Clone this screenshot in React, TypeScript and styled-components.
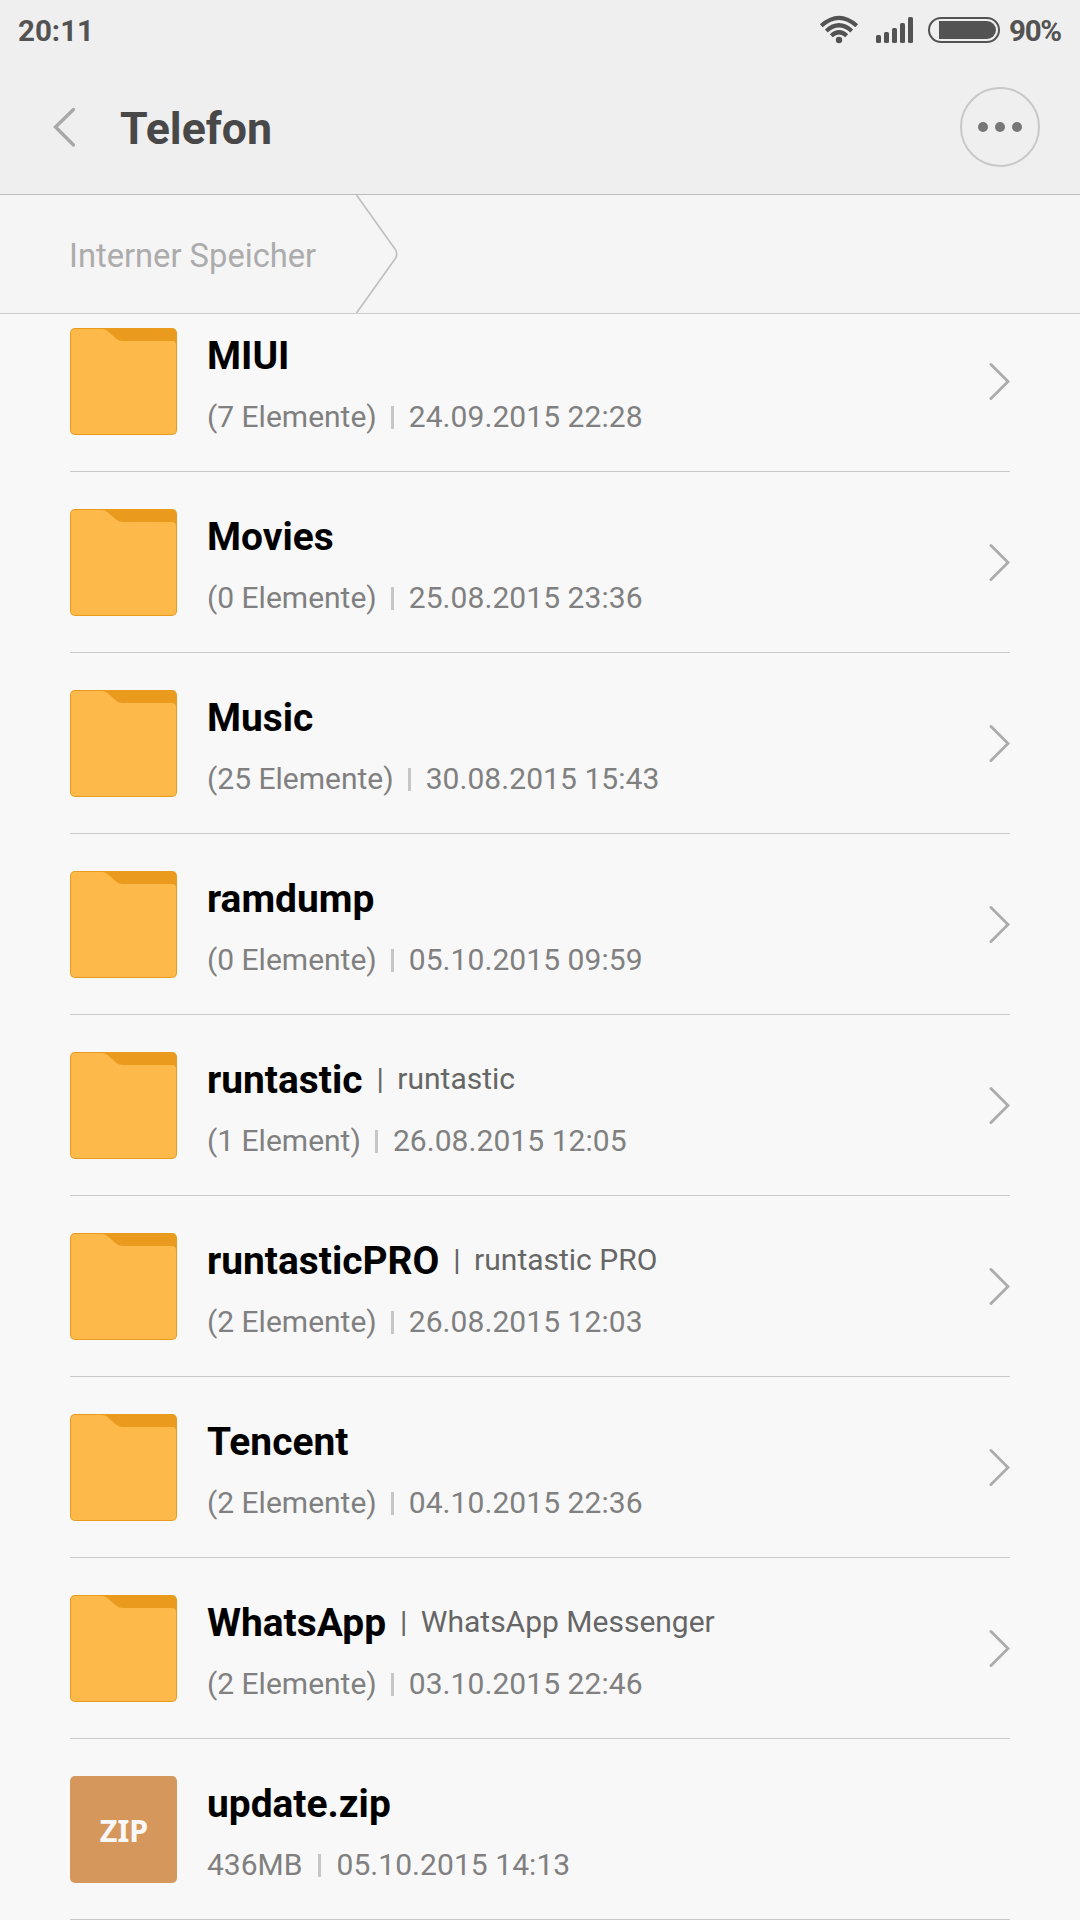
import React from 'react';
import styled, { createGlobalStyle } from 'styled-components';

const GlobalStyle = createGlobalStyle`
  * { box-sizing: border-box; }
  html, body { margin: 0; padding: 0; }
  body { background: #f8f8f8; font-family: Roboto, "Noto Sans", sans-serif; }
`;

const Screen = styled.main`
  width: 1080px;
  height: 1920px;
  display: flex;
  flex-direction: column;
  overflow: hidden;
  background: #f8f8f8;
`;

const TopArea = styled.header`
  height: 195px;
  flex: none;
  display: flex;
  flex-direction: column;
  background: #efefef;
  border-bottom: 1px solid #bdbdbd;
`;

const StatusBar = styled.div`
  height: 60px;
  padding: 0 18px;
  display: flex;
  align-items: center;
  justify-content: space-between;
  color: #535353;
  font-size: 29.5px;
  font-weight: 700;
  line-height: 60px;
`;

const StatusIcons = styled.div`
  display: flex;
  align-items: center;
  height: 60px;
`;

const WifiIcon = styled.svg`
  width: 40px;
  height: 60px;
  margin-right: 17px;
`;

const SignalBars = styled.div`
  display: flex;
  align-items: flex-end;
  gap: 3px;
  height: 26px;
  margin-right: 15px;
`;

const Bar = styled.span<{ $height: number }>`
  width: 5px;
  height: ${(p) => p.$height}px;
  border-radius: 1.5px;
  background: #535353;
`;

const Battery = styled.div`
  width: 72px;
  height: 26px;
  padding: 2px 2px 2px 9px;
  border: 2px solid #535353;
  border-radius: 13px;
  margin-right: 9px;
`;

const BatteryLevel = styled.div`
  width: 57px;
  height: 18px;
  border-radius: 0 9px 9px 0;
  background: #535353;
`;

const Time = styled.span`
  display: block;
  padding-top: 2px;
`;

const Percent = styled.span`
  display: block;
  width: 53px;
  padding-top: 1px;
  letter-spacing: -1.3px;
  white-space: nowrap;
`;

const TitleBar = styled.div`
  height: 134px;
  padding: 0 40px 0 50px;
  display: flex;
  align-items: center;
`;

const BackIcon = styled.svg`
  width: 28px;
  height: 44px;
  margin-right: 42px;
`;

const PageTitle = styled.h1`
  flex: 1;
  margin: 0;
  padding-top: 3px;
  color: #484848;
  font-size: 44.7px;
  font-weight: 700;
  line-height: 60px;
`;

const MoreButton = styled.button`
  width: 80px;
  height: 80px;
  padding: 0;
  display: flex;
  align-items: center;
  justify-content: center;
  gap: 7px;
  border: 2px solid #c8c8c8;
  border-radius: 50%;
  background: transparent;
`;

const Dot = styled.span`
  width: 10px;
  height: 10px;
  border-radius: 50%;
  background: #777777;
`;

const Breadcrumb = styled.nav`
  height: 119px;
  flex: none;
  padding-left: 69px;
  display: flex;
  align-items: center;
  background: #f5f5f5;
  border-bottom: 1px solid #cccccc;
`;

const Crumb = styled.span`
  width: 286px;
  padding-top: 4px;
  color: #acacac;
  font-size: 32.7px;
  line-height: 44px;
`;

const CrumbArrow = styled.svg`
  width: 44px;
  height: 118px;
`;

const ListViewport = styled.section`
  flex: 1;
  min-height: 0;
  overflow: hidden;
`;

const List = styled.ul`
  margin: -23px 70px 0;
  padding: 0;
  list-style: none;
`;

const Row = styled.li`
  height: 181px;
  padding: 0 0 1px;
  display: flex;
  align-items: center;
  border-bottom: 1px solid #c9c9c9;
`;

const FolderIcon = styled.svg`
  width: 107px;
  height: 107px;
  margin-top: 2px;
  flex: none;
`;

const ZipIcon = styled.div`
  width: 107px;
  height: 107px;
  margin-top: 2px;
  padding: 0 0 0 1px;
  flex: none;
  display: flex;
  align-items: center;
  justify-content: center;
  border-radius: 5px;
  background: #d5975c;
  color: #f8f8f8;
  font: 700 30.5px/40px "Noto Sans", sans-serif;
`;

const Info = styled.div`
  flex: 1;
  height: 107px;
  margin-top: 2px;
  padding: 2px 0 0 30px;
`;

const NameLine = styled.div`
  height: 52px;
  display: flex;
  align-items: center;
  white-space: nowrap;
`;

const Name = styled.span`
  color: #000000;
  font-size: 38.9px;
  font-weight: 700;
  line-height: 52px;
`;

const Alias = styled.span`
  color: #666666;
  font-size: 30px;
  line-height: 50px;
  margin-top: -2px;
`;

const Pipe = styled(Alias)`
  margin-left: 14px;
  margin-right: 13.5px;
`;

const MetaLine = styled.div`
  height: 40px;
  margin-top: 15px;
  display: flex;
  align-items: center;
  color: #808080;
  font-size: 30px;
  line-height: 40px;
  white-space: nowrap;
`;

const MetaDivider = styled.span<{ $wide?: boolean }>`
  width: 3px;
  height: 23px;
  margin: 0 15px 0 ${(p) => (p.$wide ? 16 : 14)}px;
  background: #c6c6c6;
`;

const DateText = styled.span`
  letter-spacing: 0.06px;
`;

const ChevronIcon = styled.svg`
  width: 24px;
  height: 42px;
  flex: none;
`;

type Entry = {
  name: string;
  alias?: string;
  detail: string;
  date: string;
  zip?: boolean;
};

const entries: Entry[] = [
  { name: 'MIUI', detail: '(7 Elemente)', date: '24.09.2015 22:28' },
  { name: 'Movies', detail: '(0 Elemente)', date: '25.08.2015 23:36' },
  { name: 'Music', detail: '(25 Elemente)', date: '30.08.2015 15:43' },
  { name: 'ramdump', detail: '(0 Elemente)', date: '05.10.2015 09:59' },
  { name: 'runtastic', alias: 'runtastic', detail: '(1 Element)', date: '26.08.2015 12:05' },
  { name: 'runtasticPRO', alias: 'runtastic PRO', detail: '(2 Elemente)', date: '26.08.2015 12:03' },
  { name: 'Tencent', detail: '(2 Elemente)', date: '04.10.2015 22:36' },
  { name: 'WhatsApp', alias: 'WhatsApp Messenger', detail: '(2 Elemente)', date: '03.10.2015 22:46' },
  { name: 'update.zip', detail: '436MB', date: '05.10.2015 14:13', zip: true },
];

const Folder = () => (
  <FolderIcon viewBox="0 0 107 107">
    <rect width="107" height="107" rx="5" fill="#ea9a1c" />
    <path
      d="M5 1H32Q35 1 37.500 3L46 10.500Q49 13 53 13H102Q106 13 106 17V102Q106 106 102 106H5Q1 106 1 102V5Q1 1 5 1Z"
      fill="#fdb94a"
    />
  </FolderIcon>
);

const FileRow = ({ entry }: { entry: Entry }) => (
  <Row>
    {entry.zip ? <ZipIcon>ZIP</ZipIcon> : <Folder />}
    <Info>
      <NameLine>
        <Name>{entry.name}</Name>
        {entry.alias && (
          <>
            <Pipe>|</Pipe>
            <Alias>{entry.alias}</Alias>
          </>
        )}
      </NameLine>
      <MetaLine>
        <span>{entry.detail}</span>
        <MetaDivider $wide={entry.zip} />
        <DateText>{entry.date}</DateText>
      </MetaLine>
    </Info>
    {!entry.zip && (
      <ChevronIcon viewBox="0 0 24 42">
        <path d="M5 4.500L22 21.500L5 38.500" fill="none" stroke="#acacac" strokeWidth="2.900" strokeLinecap="round" />
      </ChevronIcon>
    )}
  </Row>
);

export default function App() {
  return (
    <>
      <GlobalStyle />
      <Screen>
        <TopArea>
          <StatusBar>
            <Time>20:11</Time>
            <StatusIcons>
              <WifiIcon viewBox="0 0 40 60" fill="none" stroke="#535353" strokeWidth="4.200">
                <path d="M2.300 25.800Q20 10 37.700 25.800" />
                <path d="M7.300 31Q20 19.600 32.700 31" />
                <path d="M12.300 35.700Q20 28.800 27.700 35.700" />
                <circle cx="20" cy="40" r="3.200" fill="#535353" stroke="none" />
              </WifiIcon>
              <SignalBars>
                {[8, 11, 15, 20, 26].map((h) => (
                  <Bar key={h} $height={h} />
                ))}
              </SignalBars>
              <Battery>
                <BatteryLevel />
              </Battery>
              <Percent>90%</Percent>
            </StatusIcons>
          </StatusBar>
          <TitleBar>
            <BackIcon viewBox="0 0 28 44">
              <path d="M23.500 4.500L5.500 22L23.500 40" fill="none" stroke="#a8a8a8" strokeWidth="3.400" strokeLinecap="round" />
            </BackIcon>
            <PageTitle>Telefon</PageTitle>
            <MoreButton aria-label="Mehr">
              <Dot />
              <Dot />
              <Dot />
            </MoreButton>
          </TitleBar>
        </TopArea>
        <Breadcrumb>
          <Crumb>Interner Speicher</Crumb>
          <CrumbArrow viewBox="0 0 44 118">
            <path d="M1.500 0L40 54Q43.500 59 40 64L1.500 118" fill="none" stroke="#c0c0c0" strokeWidth="1.700" />
          </CrumbArrow>
        </Breadcrumb>
        <ListViewport>
          <List>
            {entries.map((entry) => (
              <FileRow key={entry.name} entry={entry} />
            ))}
          </List>
        </ListViewport>
      </Screen>
    </>
  );
}
